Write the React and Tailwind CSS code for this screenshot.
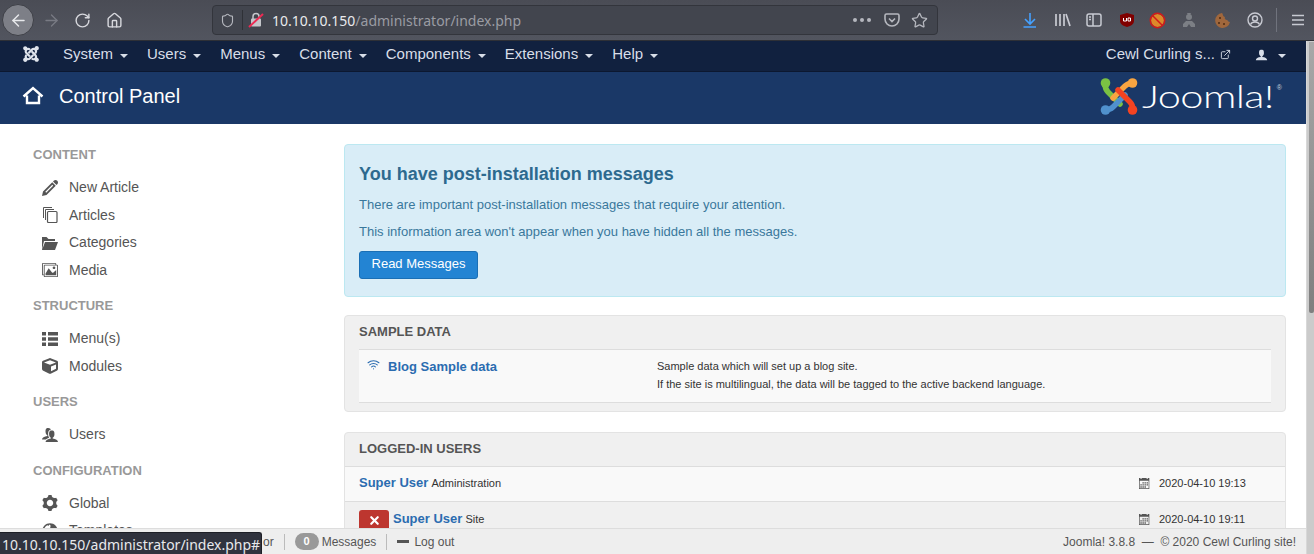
import React from "react";
import { FaJoomla, FaCube, FaGlobeAmericas } from "react-icons/fa";
import { ImPencil, ImFolderOpen, ImImages, ImCog, ImUser, ImUsers, ImCalendar } from "react-icons/im";
import { ArrowLeft, ArrowRight, RotateCw, Home, Shield, Star, ExternalLink, Wifi, X } from "lucide-react";

const sans = "font-['Liberation_Sans',Arial,sans-serif]";

function Caret() {
    return <span className="ml-[7px] inline-block w-0 h-0 align-middle border-x-[4px] border-x-transparent border-t-[4px] border-t-current mt-[3px]" />;
}

function NavItem({ label }) {
    return (
        <span className="text-[15px] text-[#d8dee8] mr-[19px] flex items-center">
            {label}
            <Caret />
        </span>
    );
}

function CopyIcon({ size }) {
    return (
        <svg width={size} height={size} viewBox="0 0 16 16" fill="none" stroke="currentColor" strokeWidth="1">
            <path d="M1.500 11V.500H10M3.500 13V2.500H12" />
            <rect x="5.500" y="4.500" width="9.500" height="11" rx="1" strokeWidth="1.200" />
        </svg>
    );
}

function ListIcon({ size }) {
    return (
        <svg width={size} height={size} viewBox="0 0 16 16" fill="currentColor">
            <path d="M0 1h4v3.500H0zM6 1h10v3.500H6zM0 6.300h4v3.500H0zM6 6.300h10v3.500H6zM0 11.600h4v3.500H0zM6 11.600h10v3.500H6z" />
        </svg>
    );
}

function ToolbarIcons() {
    return (
        <div className="flex items-center ml-auto text-[#c8cad2]">
            <svg width="18" height="18" viewBox="0 0 18 18" fill="none" stroke="#45a1ff" strokeWidth="1.6">
                <path d="M9 2v10M4 8l5 5 5-5M2.5 16h12.5" />
            </svg>
            <svg width="17" height="16" viewBox="0 0 17 16" className="ml-[15px]" fill="none" stroke="currentColor" strokeWidth="1.7">
                <path d="M2 2v12M6 2v12M10 2v12M12 2l4 12" />
            </svg>
            <svg width="16" height="14" viewBox="0 0 16 14" className="ml-[15px]" fill="none" stroke="currentColor" strokeWidth="1.5">
                <rect x="1" y="1" width="14" height="12" rx="2" />
                <path d="M7 1v12M3 4h2M3 6.5h2" />
            </svg>
            <svg width="16" height="16" viewBox="0 0 16 16" className="ml-[17px]">
                <path d="M8 1l7 2v6c0 3-3 5-7 6-4-1-7-3-7-6V3z" fill="#800000" />
                <path d="M4.5 6v3h3V6M9 6v3h2.5V6z" fill="none" stroke="#fff" strokeWidth="1" />
            </svg>
            <svg width="17" height="17" viewBox="0 0 17 17" className="ml-[14px]">
                <circle cx="8.5" cy="8.5" r="6.500" fill="#dd8a2a" />
                <circle cx="8.5" cy="8.5" r="7.2" fill="none" stroke="#d11a1a" strokeWidth="1.5" />
                <path d="M3.5 3.5l10 10" stroke="#d11a1a" strokeWidth="1.5" />
            </svg>
            <svg width="16" height="16" viewBox="0 0 16 16" className="ml-[15px]" fill="#7c7f85">
                <circle cx="8" cy="5" r="3" />
                <path d="M6 1l1 2h2l1-2zM2 15v-3l3-3h6l3 3v3h-4l-2-3-2 3z" />
            </svg>
            <svg width="17" height="17" viewBox="0 0 17 17" className="ml-[17px]">
                <path d="M8 1a7.5 7.5 0 1 0 8 9c-2 0-2-1.500-3-2-1 0-3-1-2-3-2 0-2-3-3-4z" fill="#a0673c" />
                <circle cx="6" cy="6" r="1" fill="#4c2a12" />
                <circle cx="5" cy="11" r="1" fill="#4c2a12" />
                <circle cx="10" cy="12" r="1" fill="#4c2a12" />
            </svg>
            <svg width="16" height="16" viewBox="0 0 16 16" className="ml-[16px]" fill="none" stroke="currentColor" strokeWidth="1.4">
                <circle cx="8" cy="8" r="7" />
                <circle cx="8" cy="6.500" r="2.500" />
                <path d="M3.500 12.500c1-2 2.500-2.500 4.500-2.500s3.500.5 4.500 2.500" />
            </svg>
            <span className="w-px h-[24px] bg-[#70737d] ml-[13px]" />
            <svg width="14" height="12" viewBox="0 0 14 12" className="ml-[14px] mr-[9px]" fill="none" stroke="currentColor" strokeWidth="1.700">
                <path d="M1 1.500h12M1 6h12M1 10.500h12" />
            </svg>
        </div>
    );
}

function Browser() {
    return (
        <div className="h-[41px] bg-gradient-to-b from-[#4a4c55] to-[#52555f] flex items-center pl-[2px] border-b border-[#2e3036]">
            <span className="w-[32px] h-[32px] rounded-full bg-[#7d7f87] border border-[#3e4047] flex items-center justify-center text-[#e8e9ec]">
                <ArrowLeft size={19} strokeWidth={1.8} />
            </span>
            <ArrowRight size={19} strokeWidth={1.6} className="ml-[8px] text-[#797b84]" />
            <RotateCw size={17} strokeWidth={2} className="ml-[13px] text-[#d7d8dd]" />
            <Home size={17} strokeWidth={2} className="ml-[15px] text-[#d7d8dd]" />
            <div className="ml-[89px] w-[726px] h-[30px] rounded-[4px] bg-[#42454e] border border-[#33353c] flex items-center px-[7px]">
                <Shield size={15} strokeWidth={1.800} className="text-[#b5b7be]" />
                <span className="w-px h-[20px] bg-[#2f3137] ml-[7px]" />
                <svg width="16" height="16" viewBox="0 0 16 16" className="ml-[5px]">
                    <rect x="3" y="6.500" width="10" height="8" rx="1" fill="#c5c6cb" />
                    <path d="M5 7V4.500a3 3 0 0 1 6 0V7" fill="none" stroke="#c5c6cb" strokeWidth="1.500" />
                    <path d="M1 15L15 2" stroke="#ed2a53" strokeWidth="2" />
                </svg>
                <span className="ml-[8px] text-[14px] font-['Noto_Sans',sans-serif] text-[#e9eaed]">
                    10.10.10.150<span className="text-[#9a9ca3]">/administrator/index.php</span>
                </span>
                <span className="ml-auto flex gap-[3px] mr-[13px]">
                    <i className="block w-[4px] h-[4px] rounded-full bg-[#b5b7be]" />
                    <i className="block w-[4px] h-[4px] rounded-full bg-[#b5b7be]" />
                    <i className="block w-[4px] h-[4px] rounded-full bg-[#b5b7be]" />
                </span>
                <svg width="16" height="15" viewBox="0 0 16 15" fill="none" stroke="#b5b7be" strokeWidth="1.600">
                    <path d="M2.500 1h11A1.500 1.500 0 0 1 15 2.500V6a7 7 0 0 1-14 0V2.500A1.500 1.500 0 0 1 2.500 1zM5 5.500L8 8.500 11 5.500" />
                </svg>
                <Star size={17} strokeWidth={1.800} className="ml-[11px] mr-[2px] text-[#b5b7be]" />
            </div>
            <ToolbarIcons />
        </div>
    );
}

function JoomlaMark() {
    return (
        <svg width="38" height="37" viewBox="0 0 38 37" fill="none" strokeWidth="5.500" strokeLinecap="round">
            <path d="M5 6C5 9 6 12 8 14L20 26" stroke="#7ac143" />
            <circle cx="5.500" cy="5" r="4.800" fill="#7ac143" />
            <path d="M33 5C30 5 27 6 25 8L13 20" stroke="#f9a541" />
            <circle cx="32.500" cy="5" r="4.800" fill="#f9a541" />
            <path d="M5 32C8 32 11 31 13 29L25 17" stroke="#5091cd" />
            <circle cx="5.500" cy="32" r="4.800" fill="#5091cd" />
            <path d="M33 32C33 29 32 26 30 24L18 12" stroke="#f44321" />
            <circle cx="32.500" cy="32" r="4.800" fill="#f44321" />
        </svg>
    );
}

function HomeOutline() {
    return (
        <svg width="22" height="20" viewBox="0 0 22 20" fill="none" stroke="#fff" strokeWidth="2.400">
            <path d="M1.500 10.500L11 2l9.500 8.500M5 9.500V17h12V9.500" />
        </svg>
    );
}

function SideGroup({ title, items, last }) {
    return (
        <div className={last ? "" : "mb-[12px]"}>
            <div className="text-[13px] leading-[20px] font-bold text-[#999] mb-[9px]">{title}</div>
            {items.map(([Icon, label]) => (
                <div key={label} className="flex items-center h-[27.500px] pl-[9px] text-[14px] text-[#555]">
                    <span className="w-[27px] flex">
                        <Icon size={16} />
                    </span>
                    {label}
                </div>
            ))}
        </div>
    );
}

function Sidebar() {
    return (
        <div className="w-[344px] shrink-0 pl-[33px] pt-[21px]">
            <SideGroup
                title="CONTENT"
                items={[
                    [ImPencil, "New Article"],
                    [CopyIcon, "Articles"],
                    [ImFolderOpen, "Categories"],
                    [ImImages, "Media"],
                ]}
            />
            <SideGroup
                title="STRUCTURE"
                items={[
                    [ListIcon, "Menu(s)"],
                    [FaCube, "Modules"],
                ]}
            />
            <SideGroup title="USERS" items={[[ImUsers, "Users"]]} />
            <SideGroup
                title="CONFIGURATION"
                items={[
                    [ImCog, "Global"],
                    [FaGlobeAmericas, "Templates"],
                ]}
                last
            />
        </div>
    );
}

function UserRow({ striped, badge, role, date }) {
    return (
        <div className={`flex items-center px-[14px] border-t border-[#ddd] ${striped ? "bg-[#f9f9f9] h-[35px] pb-[2px]" : "h-[35px]"}`}>
            {badge && (
                <span className="w-[30px] h-[22px] mt-[3px] bg-[#bd362f] rounded-[3px] flex items-center justify-center text-white mr-[4px]">
                    <X size={13} strokeWidth={4} />
                </span>
            )}
            <span className="text-[13px] font-bold text-[#2b6cb0]">Super User</span>
            <span className="ml-[3px] text-[11px] text-[#333]">{role}</span>
            <span className="ml-auto w-[132px] flex items-center text-[11px] text-[#333]">
                <ImCalendar size={11} className="text-[#555] mr-[9px]" />
                {date}
            </span>
        </div>
    );
}

function Main() {
    return (
        <div className="w-[942px] pt-[20px]">
            <div className="h-[153px] bg-[#d9edf7] border border-[#bce8f1] rounded-[4px] px-[14px] pt-[17px] text-[#39789c]">
                <h2 className="text-[18px] leading-[24px] font-bold text-[#2d6a8f]">You have post-installation messages</h2>
                <p className="text-[13px] leading-[18px] mt-[10px]">There are important post-installation messages that require your attention.</p>
                <p className="text-[13px] leading-[18px] mt-[9px]">This information area won't appear when you have hidden all the messages.</p>
                <button className="mt-[10px] h-[28px] w-[119px] pb-[2px] bg-[#2384d3] border border-[#1a6fb5] rounded-[3px] text-[13px] text-white">Read Messages</button>
            </div>

            <div className="mt-[18px] h-[97px] bg-[#f0f0f0] border border-[#e3e3e3] rounded-[4px] px-[14px]">
                <div className="h-[33px] pb-[2px] flex items-center text-[13px] font-bold text-[#555]">SAMPLE DATA</div>
                <div className="h-[54px] flex bg-[#f9f9f9] border-y border-[#ddd] pt-[7px]">
                    <div className="w-[298px] flex text-[13px] font-bold text-[#2b6cb0] pl-[8px]">
                        <Wifi size={13} className="mr-[8px] mt-[1px]" />
                        Blog Sample data
                    </div>
                    <div className="text-[11px] leading-[18px] text-[#333]">
                        <div>Sample data which will set up a blog site.</div>
                        <div>If the site is multilingual, the data will be tagged to the active backend language.</div>
                    </div>
                </div>
            </div>

            <div className="mt-[20px] bg-[#f0f0f0] border border-[#e3e3e3] rounded-[4px]">
                <div className="h-[33px] pb-[2px] px-[14px] flex items-center text-[13px] font-bold text-[#555]">LOGGED-IN USERS</div>
                <UserRow striped role="Administration" date="2020-04-10 19:13" />
                <UserRow badge role="Site" date="2020-04-10 19:11" />
            </div>
        </div>
    );
}

export default function App() {
    return (
        <div className={`h-[554px] w-[1314px] overflow-hidden relative bg-white ${sans}`}>
            <Browser />
            <div className="flex h-[513px]">
                <div className="flex-1 min-w-0">
                    <div className="h-[31px] pb-[4px] bg-[#11213f] flex items-center pl-[22px] pr-[20px] border-b border-[#0c1830]">
                        <FaJoomla size={18} className="text-[#dfe4ec] mr-[23px]" />
                        {["System", "Users", "Menus", "Content", "Components", "Extensions", "Help"].map((m) => (
                            <NavItem key={m} label={m} />
                        ))}
                        <span className="ml-auto text-[15px] text-[#d8dee8] flex items-center">
                            Cewl Curling s...
                            <ExternalLink size={11} className="ml-[5px]" />
                        </span>
                        <span className="ml-[24px] flex items-center text-[#d8dee8]">
                            <ImUser size={13} className="mr-[3px]" />
                            <Caret />
                        </span>
                    </div>
                    <div className="h-[52px] pb-[4px] bg-[#1a3867] flex items-center pl-[22px] pr-[26px] text-white">
                        <HomeOutline />
                        <span className="ml-[15px] text-[20px]">Control Panel</span>
                        <span className="ml-auto flex items-center">
                            <JoomlaMark />
                            <span className="relative ml-[4px] w-[138px] h-[32px] flex items-center">
                                <span className="text-[32px] leading-none font-['Lato',sans-serif] font-light tracking-[-0.5px] scale-x-[1.3] origin-left whitespace-nowrap">Joomla!</span>
                                <span className="absolute right-[-2px] top-[3px] text-[7px] text-[#c9d2de]">®</span>
                            </span>
                        </span>
                    </div>
                    <div className="flex">
                        <Sidebar />
                        <Main />
                    </div>
                </div>
                <div className="w-[8px] shrink-0 bg-[#cbcbcb] border-l border-[#d8d8d8] pl-[2px]">
                    <div className="h-[271px] mt-[1px] rounded-b-[2px] bg-gradient-to-b from-[#a8a8a8] to-[#7f7f7f]" />
                </div>
            </div>

            <div className="absolute left-0 right-[8px] bottom-0 h-[26px] bg-[#eee] border-t border-[#ddd] flex items-center pr-[10px] text-[12px] text-[#555]">
                <span className="ml-[263px]">or</span>
                <span className="w-px h-[16px] bg-[#bbb] ml-[10px]" />
                <span className="ml-[10px] w-[24px] h-[17px] rounded-full bg-[#999] text-white font-bold text-[11px] flex items-center justify-center">0</span>
                <span className="ml-[3px]">Messages</span>
                <span className="w-px h-[16px] bg-[#bbb] ml-[10px]" />
                <span className="ml-[10px] w-[12px] h-[3px] bg-[#555]" />
                <span className="ml-[5px]">Log out</span>
                <span className="ml-auto">Joomla! 3.8.8 &nbsp;— &nbsp;© 2020 Cewl Curling site!</span>
            </div>
            <div className="absolute left-0 bottom-0 w-[262px] h-[22px] bg-[#30333e] border-t border-r border-[#1d1f26] rounded-tr-[3px] pl-[2px] text-[14px] leading-[23px] text-[#e8e9ec] font-['Noto_Sans',sans-serif] whitespace-nowrap">
                10.10.10.150/administrator/index.php#
            </div>
        </div>
    );
}
